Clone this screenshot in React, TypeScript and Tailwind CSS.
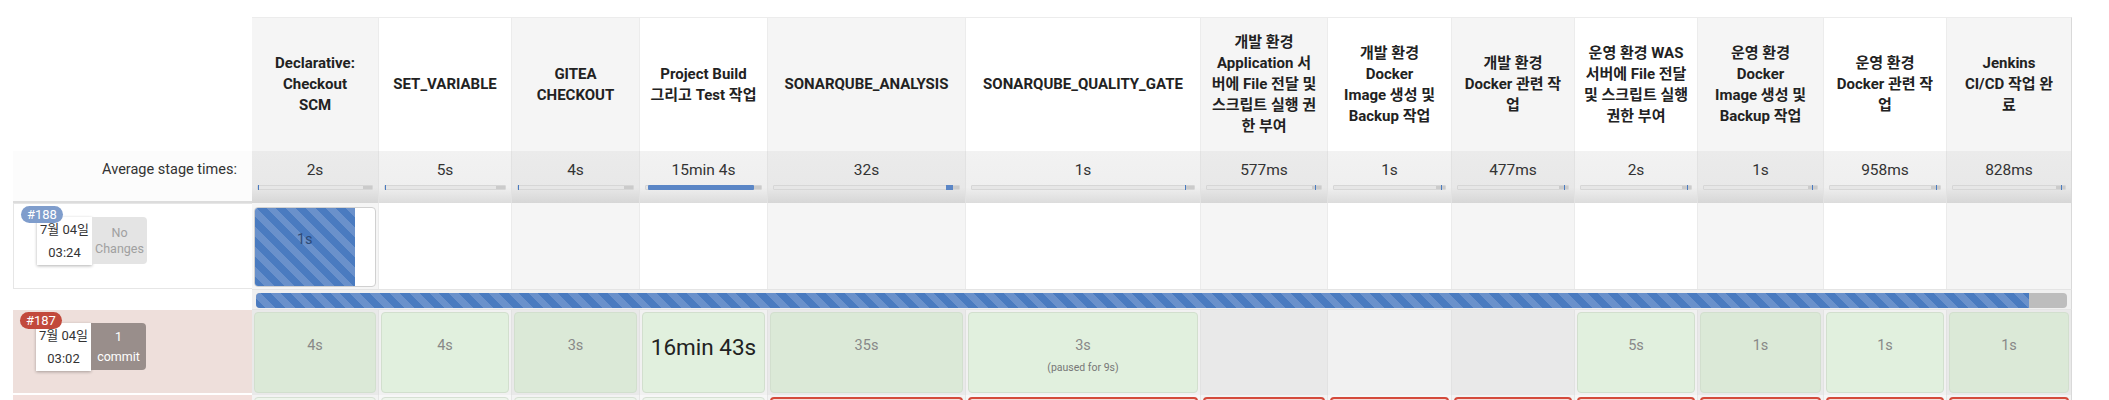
import React from 'react';

type Bar = { kind: 'tick' | 'fill' | 'block'; at: number };

interface Stage {
  lines: string[];
  avg: string;
  gray: boolean;
  bar: Bar;
}

const stages: Stage[] = [
  { lines: ['Declarative:', 'Checkout', 'SCM'], avg: '2s', gray: true, bar: { kind: 'tick', at: 0 } },
  { lines: ['SET_VARIABLE'], avg: '5s', gray: false, bar: { kind: 'tick', at: 0 } },
  { lines: ['GITEA', 'CHECKOUT'], avg: '4s', gray: true, bar: { kind: 'tick', at: 0 } },
  { lines: ['Project Build', '그리고 Test 작업'], avg: '15min 4s', gray: false, bar: { kind: 'fill', at: 92 } },
  { lines: ['SONARQUBE_ANALYSIS'], avg: '32s', gray: true, bar: { kind: 'block', at: 93 } },
  { lines: ['SONARQUBE_QUALITY_GATE'], avg: '1s', gray: false, bar: { kind: 'tick', at: 96 } },
  { lines: ['개발 환경', 'Application 서', '버에 File 전달 및', '스크립트 실행 권', '한 부여'], avg: '577ms', gray: true, bar: { kind: 'tick', at: 95 } },
  { lines: ['개발 환경', 'Docker', 'Image 생성 및', 'Backup 작업'], avg: '1s', gray: false, bar: { kind: 'tick', at: 96 } },
  { lines: ['개발 환경', 'Docker 관련 작', '업'], avg: '477ms', gray: true, bar: { kind: 'tick', at: 96 } },
  { lines: ['운영 환경 WAS', '서버에 File 전달', '및 스크립트 실행', '권한 부여'], avg: '2s', gray: false, bar: { kind: 'tick', at: 96 } },
  { lines: ['운영 환경', 'Docker', 'Image 생성 및', 'Backup 작업'], avg: '1s', gray: true, bar: { kind: 'tick', at: 96 } },
  { lines: ['운영 환경', 'Docker 관련 작', '업'], avg: '958ms', gray: false, bar: { kind: 'tick', at: 96 } },
  { lines: ['Jenkins', 'CI/CD 작업 완', '료'], avg: '828ms', gray: true, bar: { kind: 'tick', at: 96 } },
];

// run #187 stage results (null = stage not run)
const run187: (string | null)[] = ['4s', '4s', '3s', '16min 43s', '35s', '3s', null, null, null, '5s', '1s', '1s', '1s'];

const grid =
  'grid grid-cols-[239px_127px_133px_128px_128px_198px_235px_127px_124px_123px_123px_126px_123px_125px]';

const stripes = 'bg-[repeating-linear-gradient(45deg,#4a7bc0_0px,#4a7bc0_7px,#6a91cb_7px,#6a91cb_14px)]';

function AvgBar({ bar }: { bar: Bar }) {
  return (
    <div className="relative mx-[5px] mt-[5px] h-[5px] rounded-[1px] border border-[#d6d6d6] bg-[#e6e6e6]">
      <div className="absolute right-0 top-0 h-full w-[9px] bg-[#cbcbcb]" />
      {bar.kind === 'tick' && (
        <div className="absolute top-[-1px] h-[5px] w-[1px] bg-[#4a7bc0]" style={{ left: `${bar.at}%` }} />
      )}
      {bar.kind === 'fill' && (
        <div className="absolute left-[2px] top-[-1px] h-[5px] rounded-[1px] bg-[#5b86c6]" style={{ width: `${bar.at}%` }} />
      )}
      {bar.kind === 'block' && (
        <div className="absolute top-[-1px] h-[5px] w-[7px] bg-[#5b86c6]" style={{ left: `${bar.at}%` }} />
      )}
    </div>
  );
}

function BuildLabel({
  num,
  badge,
  time,
  changes,
  dark,
}: {
  num: string;
  badge: string;
  time: string;
  changes: string[];
  dark: boolean;
}) {
  return (
    <div className="relative pl-[23px] pt-[13px]">
      <div className={`absolute left-[7px] top-[2px] z-10 rounded-full px-[6px] text-[13px] leading-[17px] text-white ${badge}`}>
        {num}
      </div>
      <div className="flex">
        <div className="flex h-[48px] w-[55px] flex-col items-center justify-center gap-[6px] bg-white text-[13px] leading-[17px] text-[#333] shadow-[0_1px_3px_rgba(0,0,0,0.3)]">
          <span>7월 04일</span>
          <span>{time}</span>
        </div>
        <div
          className={`flex h-[47px] w-[55px] flex-col items-center justify-center rounded-r-[4px] text-[12.5px] leading-[16px] ${
            dark ? 'bg-[#998e8b] text-white gap-[4px]' : 'bg-[#e4e4e4] text-[#a0a0a0]'
          }`}
        >
          {changes.map((c) => (
            <span key={c}>{c}</span>
          ))}
        </div>
      </div>
    </div>
  );
}

export default function App() {
  return (
    <div className="min-h-[400px] bg-white pl-[13px] pt-[17px] font-['Roboto','Noto_Sans_CJK_KR',sans-serif] text-[#333]">
      {/* header */}
      <div className={`${grid} h-[134px]`}>
        <div className="bg-white" />
        {stages.map((s, i) => (
          <div
            key={i}
            className={`flex flex-col items-center justify-center border-t border-r border-[#ececec] px-1 text-center text-[15px] font-bold leading-[21px] text-[#222] ${
              s.gray ? 'bg-[#f5f5f5]' : 'bg-white'
            } ${i === stages.length - 1 ? 'border-r-[#d9d9d9]' : ''}`}
          >
            {s.lines.map((l, j) => (
              <span key={j} className="whitespace-nowrap">
                {l}
              </span>
            ))}
          </div>
        ))}
      </div>

      {/* average stage times */}
      <div className={`${grid} h-[52px]`}>
        <div className="flex items-start justify-end border-b-2 border-[#dcdcdc] bg-[#fcfcfc] pr-[15px] pt-[9px] text-[14.5px] leading-[20px] text-[#333]">
          Average stage times:
        </div>
        {stages.map((s, i) => (
          <div
            key={i}
            className={`border-r border-[#e2e2e2] pt-[9px] ${
              s.gray
                ? 'bg-[linear-gradient(to_bottom,#ebebeb_0%,#e8e8e8_70%,#d6d6d6_100%)]'
                : 'bg-[linear-gradient(to_bottom,#f2f2f2_0%,#efefef_70%,#dcdcdc_100%)]'
            } ${i === stages.length - 1 ? 'border-r-[#d9d9d9]' : ''}`}
          >
            <div className="text-center text-[15.5px] leading-[20px] text-[#333]">{s.avg}</div>
            <AvgBar bar={s.bar} />
          </div>
        ))}
      </div>

      {/* build #188 (running) */}
      <div className={`${grid} h-[86px]`}>
        <div className="border border-r-0 border-[#e6e6e6] bg-white">
          <BuildLabel num="#188" badge="bg-[#7f9dcc]" time="03:24" changes={['No', 'Changes']} dark={false} />
        </div>
        {stages.map((s, i) => (
          <div
            key={i}
            className={`border-r border-[#ebebeb] ${s.gray ? 'bg-[#f5f5f5]' : 'bg-white'} ${
              i === stages.length - 1 ? 'border-r-[#d9d9d9]' : ''
            }`}
          >
            {i === 0 && (
              <div className="ml-[2px] mr-[2px] mt-[4px] flex h-[80px] overflow-hidden rounded-[4px] border border-[#d0d0d0] bg-white">
                <div className={`relative w-[83%] ${stripes}`}>
                  <div className="pt-[22px] text-center text-[14.5px] leading-[20px] text-[#2e4b78]">1s</div>
                </div>
              </div>
            )}
          </div>
        ))}
      </div>

      {/* overall progress */}
      <div className={`${grid} h-[21px]`}>
        <div className="bg-white" />
        <div className="col-span-13 border-y border-[#e4e4e4] border-r border-r-[#d9d9d9] bg-[#f0f0f0] px-[4px] pt-[3px]">
          <div className="flex h-[15px] overflow-hidden rounded-[4px] bg-[#bdbdbd]">
            <div className={`h-full w-[97.9%] ${stripes}`} />
          </div>
        </div>
      </div>

      {/* build #187 */}
      <div className={`${grid} h-[85px]`}>
        <div className="border-b-2 border-white bg-[#eedfdb]">
          <BuildLabel num="#187" badge="bg-[#c2493c]" time="03:02" changes={['1', 'commit']} dark />
        </div>
        {stages.map((s, i) => {
          const v = run187[i];
          return (
            <div
              key={i}
              className={`border-r border-[#e2e2e2] ${s.gray ? 'bg-[#e9e9e9]' : 'bg-[#f1f1f1]'} ${
                i === stages.length - 1 ? 'border-r-[#d9d9d9]' : ''
              }`}
            >
              {v && (
                <div
                  className={`mx-[2px] mt-[2px] h-[81px] rounded-[4px] border border-[#d2dfce] text-center ${
                    s.gray ? 'bg-[#dbe9d7]' : 'bg-[#e1f0de]'
                  }`}
                >
                  {v === '16min 43s' ? (
                    <div className="pt-[20px] text-[22.5px] leading-[28px] text-[#222]">{v}</div>
                  ) : (
                    <>
                      <div className="pt-[23px] text-[14.5px] leading-[20px] text-[#888]">{v}</div>
                      {i === 5 && <div className="pt-[5px] text-[10.5px] leading-[14px] text-[#777]">(paused for 9s)</div>}
                    </>
                  )}
                </div>
              )}
            </div>
          );
        })}
      </div>

      {/* build #186 (failed) */}
      <div className={`${grid} h-[85px]`}>
        <div className="bg-[#f3dfdc]" />
        {stages.map((s, i) => (
          <div
            key={i}
            className={`border-r border-[#e6e6e6] ${s.gray ? 'bg-[#f3f3f3]' : 'bg-[#f7f7f7]'} ${
              i === stages.length - 1 ? 'border-r-[#d9d9d9]' : ''
            }`}
          >
            <div
              className={`mx-[2px] mt-[2px] h-[81px] rounded-[4px] ${
                i < 4 ? 'border border-[#d6e0d3] bg-[#eef5ec]' : 'border-2 border-[#d44a3b] bg-[#f6dcda]'
              }`}
            />
          </div>
        ))}
      </div>
    </div>
  );
}
